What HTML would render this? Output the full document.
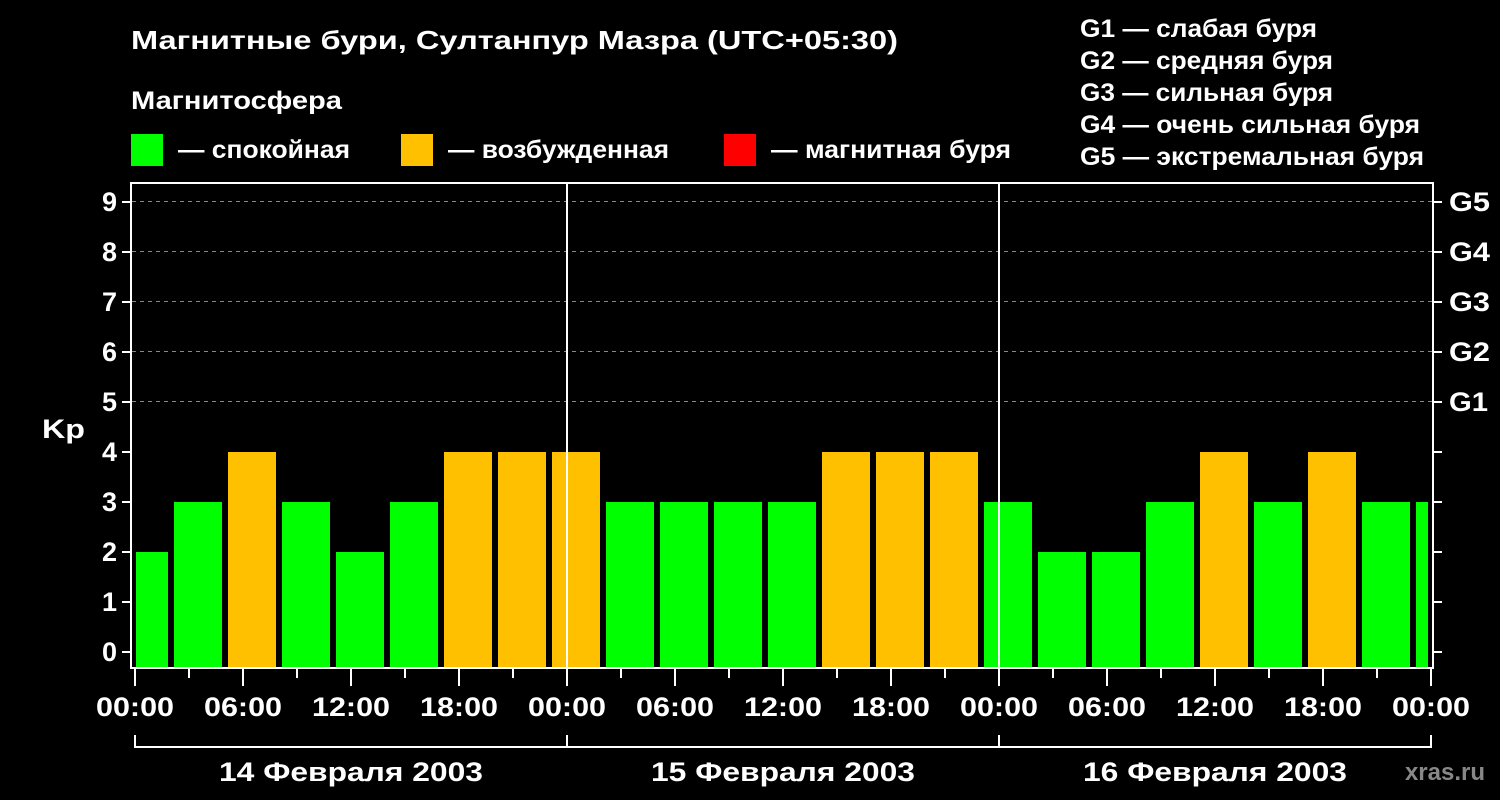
<!DOCTYPE html><html><head><meta charset="utf-8"><style>body{margin:0;background:#000}svg{display:block}text{font-family:"Liberation Sans",Arial,sans-serif;font-weight:bold;fill:#fff}</style></head><body>
<svg width="1500" height="800" xmlns="http://www.w3.org/2000/svg">
<rect width="1500" height="800" fill="#000"/>
<text x="131" y="49" font-size="26" textLength="767" lengthAdjust="spacingAndGlyphs">Магнитные бури, Султанпур Мазра (UTC+05:30)</text>
<text x="131" y="109" font-size="25" textLength="211" lengthAdjust="spacingAndGlyphs">Магнитосфера</text>
<rect x="131" y="134" width="32" height="32" fill="#00ff00"/><text x="178" y="158" font-size="25" textLength="172" lengthAdjust="spacingAndGlyphs">— спокойная</text>
<rect x="401" y="134" width="32" height="32" fill="#ffc000"/><text x="448" y="158" font-size="25" textLength="221" lengthAdjust="spacingAndGlyphs">— возбужденная</text>
<rect x="724" y="134" width="32" height="32" fill="#ff0000"/><text x="771" y="158" font-size="25" textLength="240" lengthAdjust="spacingAndGlyphs">— магнитная буря</text>
<g font-size="25"><text x="1080" y="37" textLength="237" lengthAdjust="spacingAndGlyphs">G1 — слабая буря</text><text x="1080" y="69" textLength="253" lengthAdjust="spacingAndGlyphs">G2 — средняя буря</text><text x="1080" y="101" textLength="253" lengthAdjust="spacingAndGlyphs">G3 — сильная буря</text><text x="1080" y="133" textLength="340" lengthAdjust="spacingAndGlyphs">G4 — очень сильная буря</text><text x="1080" y="165" textLength="344" lengthAdjust="spacingAndGlyphs">G5 — экстремальная буря</text></g>
<g stroke="#888" stroke-dasharray="4,4" stroke-width="1"><line x1="132" x2="1432" y1="201.5" y2="201.5"/><line x1="132" x2="1432" y1="251.5" y2="251.5"/><line x1="132" x2="1432" y1="301.5" y2="301.5"/><line x1="132" x2="1432" y1="351.5" y2="351.5"/><line x1="132" x2="1432" y1="401.5" y2="401.5"/></g>
<g id="bars"></g>
<g stroke="#fff" stroke-width="2" fill="none"><rect x="131" y="183" width="1302" height="485"/><line x1="567" y1="183" x2="567" y2="668"/><line x1="999" y1="183" x2="999" y2="668"/></g>
<g id="ticks" stroke="#fff" stroke-width="2"></g>
<g font-size="27" text-anchor="end"><text x="117" y="211">9</text><text x="117" y="261">8</text><text x="117" y="311">7</text><text x="117" y="361">6</text><text x="117" y="411">5</text><text x="117" y="461">4</text><text x="117" y="511">3</text><text x="117" y="561">2</text><text x="117" y="611">1</text><text x="117" y="661">0</text></g>
<text x="42" y="438" font-size="27" textLength="43" lengthAdjust="spacingAndGlyphs">Kp</text>
<g font-size="27"><text x="1449" y="211" textLength="41" lengthAdjust="spacingAndGlyphs">G5</text><text x="1449" y="261" textLength="41" lengthAdjust="spacingAndGlyphs">G4</text><text x="1449" y="311" textLength="41" lengthAdjust="spacingAndGlyphs">G3</text><text x="1449" y="361" textLength="41" lengthAdjust="spacingAndGlyphs">G2</text><text x="1449" y="411" textLength="39" lengthAdjust="spacingAndGlyphs">G1</text></g>
<g id="xl" font-size="27" text-anchor="middle"></g>
<g stroke="#fff" stroke-width="2"><line x1="135" y1="747" x2="1431" y2="747"/><line x1="135" y1="735" x2="135" y2="748"/><line x1="567" y1="735" x2="567" y2="748"/><line x1="999" y1="735" x2="999" y2="748"/><line x1="1431" y1="735" x2="1431" y2="748"/></g>
<g font-size="27" text-anchor="middle"><text x="351" y="781" textLength="264" lengthAdjust="spacingAndGlyphs">14 Февраля 2003</text><text x="783" y="781" textLength="264" lengthAdjust="spacingAndGlyphs">15 Февраля 2003</text><text x="1215" y="781" textLength="264" lengthAdjust="spacingAndGlyphs">16 Февраля 2003</text></g>
<text x="1485" y="780" font-size="24" text-anchor="end" style="fill:#888">xras.ru</text>
</svg>
<script>
var ns="http://www.w3.org/2000/svg",b=document.getElementById("bars"),t=document.getElementById("ticks"),xl=document.getElementById("xl");
function r(x,w,k){var e=document.createElementNS(ns,"rect");e.setAttribute("x",x);e.setAttribute("width",w);var y=652-50*k;e.setAttribute("y",y);e.setAttribute("height",668-y);e.setAttribute("fill",k>=4?"#ffc000":"#00ff00");b.appendChild(e);}
r(136,32,2);
var v=[3,4,3,2,3,4,4,4,3,3,3,3,4,4,4,3,2,2,3,4,3,4,3];
v.forEach(function(k,i){r(174+54*i,48,k)});r(1416,12,3);
function l(a,b2,c,d){var e=document.createElementNS(ns,"line");e.setAttribute("x1",a);e.setAttribute("y1",b2);e.setAttribute("x2",c);e.setAttribute("y2",d);t.appendChild(e);}
for(var k=0;k<10;k++){var y=652-50*k;l(122,y,131,y);l(1433,y,1442,y);}
for(var i=0;i<=24;i++){var x=135+54*i;l(x,668,x,i%2==0?686:678);}
var lab=["00:00","06:00","12:00","18:00"];
for(var i=0;i<=12;i++){var e=document.createElementNS(ns,"text");e.setAttribute("x",135+108*i);e.setAttribute("y",716);e.setAttribute("textLength",78);e.setAttribute("lengthAdjust","spacingAndGlyphs");e.textContent=lab[i%4];xl.appendChild(e);}
</script>
</body></html>
